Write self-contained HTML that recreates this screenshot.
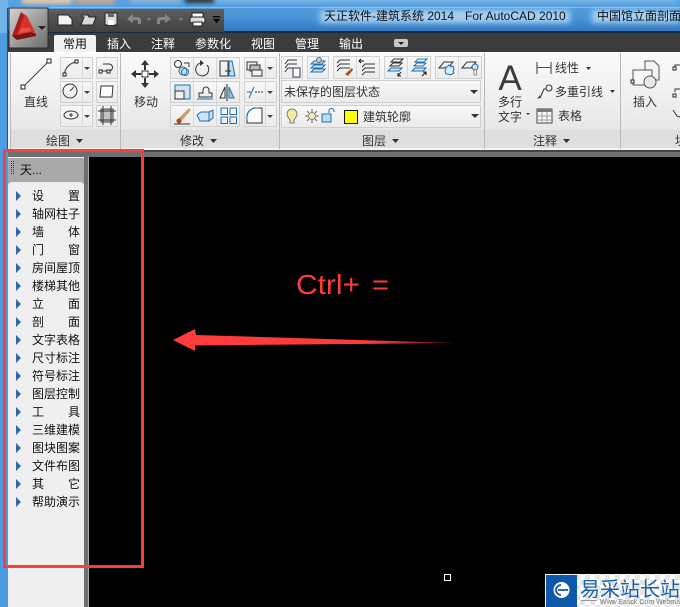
<!DOCTYPE html>
<html><head><meta charset="utf-8"><style>
html,body{margin:0;padding:0;background:#000;width:680px;height:607px;overflow:hidden}
svg{display:block}
text{font-family:"Liberation Sans","Noto Sans CJK SC",sans-serif;font-size:12px;fill:#222}
.w{fill:#fff}.m{fill:#111}.c{text-anchor:middle}
.k{fill:none;stroke:#333;stroke-width:1}.b{fill:none;stroke:#1f6fae;stroke-width:1}
</style></head><body>
<svg width="680" height="607" viewBox="0 0 680 607" xmlns="http://www.w3.org/2000/svg">
<defs>
<linearGradient id="tb" x1="0" y1="0" x2="0" y2="1"><stop offset="0" stop-color="#5aa3e0"/><stop offset=".55" stop-color="#4a93d8"/><stop offset="1" stop-color="#2f74bf"/></linearGradient>
<linearGradient id="rb" x1="0" y1="0" x2="0" y2="1"><stop offset="0" stop-color="#fafafa"/><stop offset="1" stop-color="#e8e8e8"/></linearGradient>
<linearGradient id="btn" x1="0" y1="0" x2="0" y2="1"><stop offset="0" stop-color="#f8f8f8"/><stop offset="1" stop-color="#ebebeb"/></linearGradient>
<linearGradient id="men" x1="0" y1="0" x2="1" y2="1"><stop offset="0" stop-color="#d4d4d4"/><stop offset="1" stop-color="#6a6a6a"/></linearGradient>
<linearGradient id="qa" x1="0" y1="0" x2="0" y2="1"><stop offset="0" stop-color="#5f5f5f"/><stop offset="1" stop-color="#404040"/></linearGradient>
<linearGradient id="ar" x1="0" y1="0" x2="1" y2="0"><stop offset="0" stop-color="#ff3c3c"/><stop offset=".7" stop-color="#ff3c3c"/><stop offset="1" stop-color="#5a1010"/></linearGradient>
<pattern id="chk" width="10" height="10" patternUnits="userSpaceOnUse"><rect width="10" height="10" fill="#fff"/><rect width="5" height="5" fill="#e4e4e4"/><rect x="5" y="5" width="5" height="5" fill="#e4e4e4"/></pattern>
<filter id="bl" x="-20%" y="-60%" width="140%" height="220%"><feGaussianBlur stdDeviation="3"/></filter>
<filter id="bl2" x="-20%" y="-100%" width="140%" height="300%"><feGaussianBlur stdDeviation="2"/></filter>
</defs>

<!-- title bar -->
<rect width="680" height="33" fill="url(#tb)"/>
<g filter="url(#bl2)">
<rect x="22" y="-3" width="50" height="7" fill="#e8c9a8"/>
<rect x="75" y="-3" width="40" height="7" fill="#c4a894"/>
<rect x="130" y="-3" width="50" height="6" fill="#8fb7d9"/>
<rect x="185" y="-3" width="30" height="6" fill="#333"/>
<rect x="215" y="-3" width="460" height="5" fill="#7fb9e8"/>
</g>
<rect x="0" y="0" width="8" height="33" fill="#5aa6e6"/>
<rect x="8" y="7" width="672" height="1" fill="#8ec4ee" opacity=".8"/>
<g filter="url(#bl)">
<rect x="320" y="10" width="250" height="13" fill="#a5d0f2"/>
<rect x="592" y="10" width="88" height="13" fill="#a5d0f2"/>
</g>
<text x="324" y="20" class="m">天正软件-建筑系统 2014</text>
<text x="465" y="20" class="m">For AutoCAD 2010</text>
<text x="597" y="20" class="m">中国馆立面剖面</text>

<!-- tab bar -->
<rect x="0" y="0" width="8" height="607" fill="#4d9be0"/>
<rect x="0" y="0" width="8" height="33" fill="#6fb3ea"/>
<rect x="7" y="8" width="1" height="145" fill="#2d4f70"/>
<rect x="8" y="32" width="672" height="21" fill="#3c3c3c"/>
<rect x="8" y="31" width="672" height="2" fill="#1a2a3a"/>

<!-- quick access -->
<rect x="48" y="9" width="176" height="23" fill="url(#qa)"/>
<path d="M58 25V15h10l4 4v6z" fill="#f2f2f2" stroke="#222"/>
<path d="M81 25l3-8h-2v-2h6l1 2h7l-3 8z" fill="#d8d8d8" stroke="#222"/>
<rect x="105" y="13" width="12" height="12" fill="#d8d8d8" stroke="#222"/><rect x="108" y="13" width="6" height="4" fill="#667"/><rect x="108" y="20" width="6" height="5" fill="#fff"/>
<path d="M127 19l6-5v3h5a3 3 0 0 1 3 3v4h-3v-2a2 2 0 0 0-2-2h-3v3z" fill="#868686"/>
<path d="M147 18h4l-2 3z" fill="#888"/>
<path d="M171 19l-6-5v3h-5a3 3 0 0 0-3 3v4h3v-2a2 2 0 0 1 2-2h3v3z" fill="#868686"/>
<path d="M179 18h4l-2 3z" fill="#888"/>
<rect x="192" y="13" width="11" height="4" fill="#fff" stroke="#222"/><rect x="190" y="17" width="15" height="6" rx="2" fill="#ddd" stroke="#222"/><rect x="193" y="22" width="9" height="4" fill="#fff" stroke="#222"/>
<rect x="213" y="16" width="7" height="1.500" fill="#000"/><path d="M213 19h7l-3.500 4z" fill="#000"/>

<!-- menu button -->
<rect x="9" y="8" width="39" height="40" fill="url(#men)" stroke="#2a2a2a"/>
<path d="M12 36L21 12l6 4 9 18-5-2-14 3z" fill="#d8322e"/>
<path d="M12 36l5 4 19-4v-2l-5-2-14 3z" fill="#7a1412"/>
<path d="M21 12l-9 24 5-1 7-19z" fill="#a81e1c"/>
<path d="M21 28h9l1 3-12 2z" fill="#f0504a"/>
<path d="M38 26h8l-4 4z" fill="#222"/>

<!-- tabs -->
<path d="M54 52V37a2 2 0 0 1 2-2h38a2 2 0 0 1 2 2v16H54z" fill="#f1f1f1"/>
<text x="63" y="48" class="m">常用</text>
<text x="107" y="48" class="w">插入</text>
<text x="151" y="48" class="w">注释</text>
<text x="195" y="48" class="w">参数化</text>
<text x="251" y="48" class="w">视图</text>
<text x="295" y="48" class="w">管理</text>
<text x="339" y="48" class="w">输出</text>
<rect x="394" y="39" width="14" height="8" rx="2" fill="#c8c8c8"/><path d="M398 42h6l-3 3z" fill="#222"/>

<!-- ribbon -->
<rect x="8" y="52" width="672" height="98" fill="#f2f2f2"/>
<rect x="8" y="52" width="672" height="1" fill="#fff"/>
<rect x="10" y="53" width="670" height="77" fill="url(#rb)"/>
<rect x="10" y="130" width="670" height="18" fill="#dedede"/>
<rect x="10" y="148" width="670" height="2" fill="#f4f4f4"/>
<rect x="10" y="53" width="1" height="96" fill="#b9b9b9"/>
<rect x="120" y="53" width="1" height="96" fill="#b9b9b9"/>
<rect x="279" y="53" width="1" height="96" fill="#b9b9b9"/>
<rect x="484" y="53" width="1" height="96" fill="#b9b9b9"/>
<rect x="620" y="53" width="1" height="96" fill="#b9b9b9"/>
<rect x="0" y="150" width="680" height="7" fill="#6f6f6f"/>
<rect x="0" y="150" width="680" height="2" fill="#444"/>
<rect x="0" y="150" width="8" height="457" fill="#4d9be0"/>

<!-- panel titles -->
<text x="46" y="145" style="fill:#333">绘图</text><path d="M76 139h7l-3.500 4z" fill="#333"/>
<text x="180" y="145" style="fill:#333">修改</text><path d="M210 139h7l-3.500 4z" fill="#333"/>
<text x="362" y="145" style="fill:#333">图层</text><path d="M392 139h7l-3.500 4z" fill="#333"/>
<text x="533" y="145" style="fill:#333">注释</text><path d="M563 139h7l-3.500 4z" fill="#333"/>
<text x="675" y="145" style="fill:#333">块</text>

<!-- draw panel -->
<path d="M23 87L49 61" stroke="#444" fill="none"/>
<rect x="21" y="85" width="4" height="4" fill="#fff" stroke="#222"/><rect x="47" y="59" width="4" height="4" fill="#fff" stroke="#222"/>
<text x="24" y="106" style="fill:#333">直线</text>
<g fill="url(#btn)" stroke="#d0d0d0">
<rect x="60.500" y="57.500" width="32" height="21"/><rect x="60.500" y="81.500" width="32" height="21"/><rect x="60.500" y="105.500" width="32" height="21"/>
<rect x="96.500" y="57.500" width="21" height="21"/><rect x="96.500" y="81.500" width="21" height="21"/><rect x="96.500" y="105.500" width="21" height="21"/>
<rect x="170.500" y="57.500" width="69" height="21"/><rect x="170.500" y="81.500" width="69" height="21"/><rect x="170.500" y="105.500" width="69" height="21"/>
<rect x="244.500" y="57.500" width="32" height="21"/><rect x="244.500" y="81.500" width="32" height="21"/><rect x="244.500" y="105.500" width="32" height="21"/>
<rect x="281.500" y="56.500" width="21" height="22"/><rect x="307.500" y="56.500" width="21" height="22"/><rect x="333.500" y="56.500" width="46" height="22"/><rect x="384.500" y="56.500" width="46" height="22"/><rect x="435.500" y="56.500" width="46" height="22"/>
<rect x="281.500" y="80.500" width="199" height="22"/><rect x="281.500" y="105.500" width="199" height="22"/>
</g>
<g stroke="#d8d8d8"><path d="M82.500 58v20M82.500 82v20M82.500 106v20M193.500 58v68M216.500 58v68M265.500 58v20M265.500 82v20M265.500 106v20M356.500 57v21M407.500 57v21M458.500 57v21"/></g>
<g fill="#444"><path d="M84 67h6l-3 3zM84 91h6l-3 3zM84 115h6l-3 3zM267 67h6l-3 3zM267 91h6l-3 3zM267 115h6l-3 3z"/></g>
<path d="M64 75q2-11 12-13" class="k"/><rect x="63" y="73" width="3" height="3" fill="#fff" stroke="#222"/><rect x="75" y="60" width="3" height="3" fill="#fff" stroke="#222"/>
<circle cx="70" cy="91" r="7" class="k"/><path d="M70 91l4-4" class="k"/>
<ellipse cx="71" cy="115" rx="7" ry="4" class="k"/><path d="M69 115h4M71 113v4" class="k"/>
<path d="M101 71h8a3 3 0 0 0 0-7h-6" class="k"/><rect x="99" y="70" width="3" height="3" fill="#fff" stroke="#222"/><rect x="107" y="70" width="3" height="3" fill="#fff" stroke="#222"/>
<path d="M101 86h12l-1 11h-12z" fill="#fff" stroke="#333"/>
<rect x="101" y="109" width="12" height="13" fill="#c4c4c4" stroke="#444"/><path d="M98 111h18M98 120h18M103 106v19M111 106v19" class="k"/>

<!-- move -->
<path d="M145 60l4 5h-3v5h-2v-5h-3zM145 88l4-5h-3v-5h-2v5h-3zM131 74l5-4v3h5v2h-5v3zM159 74l-5-4v3h-5v2h5v3z" fill="#333"/>
<rect x="142" y="71" width="6" height="6" fill="#fff" stroke="#333"/>
<text x="134" y="106" style="fill:#333">移动</text>

<!-- modify icons -->
<circle cx="178" cy="64" r="3.500" class="k"/><circle cx="183" cy="71" r="4" fill="#cfe5f5" stroke="#1f6fae"/><circle cx="185" cy="72" r="3.500" class="b"/><path d="M184 63h5v4" class="k"/>
<path d="M201 63a6.500 6.500 0 1 0 6 2" class="k" stroke-width="1.500"/><path d="M200 60l4 3-4 3z" fill="#333"/>
<path d="M220 61h8v15h-8z" class="k"/><path d="M229 61h3l3 15h-6z" fill="#c0dcf0" stroke="#1f6fae"/><path d="M225 71h6" class="k"/>
<rect x="175" y="85" width="15" height="14" fill="#cfe5f5" stroke="#1f6fae"/><rect x="175" y="91" width="9" height="8" fill="#f2f2f2" stroke="#333"/>
<path d="M199 97v-4h4v-3a3 3 0 0 1 6 0v3h3v4z" class="k"/><path d="M197 99h16" class="b"/>
<path d="M227 84v17" stroke="#222"/><path d="M225 87l-5 11h5z" fill="#f2f2f2" stroke="#333"/><path d="M229 87l5 11h-5z" fill="#9cc8e6" stroke="#1f6fae"/>
<path d="M176 121l13-13 2 2-11 13z" fill="#c8a070"/><circle cx="179" cy="121" r="2.500" fill="#b5421a"/><path d="M174 124h16" stroke="#333"/>
<path d="M197 115l4-3h8v9h-9zM209 112l4-2v8l-4 3z" fill="#cfe5f5" stroke="#1f6fae"/>
<g class="b"><rect x="221" y="108" width="6.500" height="6.500"/><rect x="230" y="108" width="6.500" height="6.500"/><rect x="221" y="117" width="6.500" height="6.500"/><rect x="230" y="117" width="6.500" height="6.500"/></g>
<rect x="247" y="62" width="10" height="8" fill="#eee" stroke="#333"/><rect x="250" y="65" width="10" height="6" fill="#bbb" stroke="#333"/><rect x="252" y="70" width="10" height="6" fill="#f5f5f5" stroke="#333"/>
<path d="M254 87l-5 11" stroke="#1f6fae"/><path d="M247 92h4" stroke="#1f6fae"/><path d="M255 92h8" stroke="#333" stroke-dasharray="2 1"/>
<path d="M247 123v-6a9 9 0 0 1 9-9h6v15z" fill="#fafafa" stroke="#333"/><path d="M247 120v-3a9 9 0 0 1 9-9h2" class="b"/>

<!-- layer icons -->
<g class="k"><path d="M285 64l3-4h9M285 68l3-4h9M285 72l3-4h9"/></g><rect x="293" y="68" width="7" height="9" fill="#fff" stroke="#335"/>
<g><path d="M311 64l3-3h11l-3 3zM311 68l3-3h11l-3 3zM311 72l3-3h11l-3 3z" fill="#cfe5f5" stroke="#1f6fae"/></g><circle cx="319" cy="60" r="2.500" fill="#ccc" stroke="#666"/>
<g class="k"><path d="M337 63l3-3h10M337 67l3-3h10M337 71l3-3h10"/></g><path d="M345 74l7-6 1 2-5 6z" fill="#a8561c"/>
<g class="k"><path d="M362 67l3-3h10M362 71l3-3h10M362 75l3-3h10"/></g><path d="M361 59l-2 2 2 2M359 61h5" stroke="#111" fill="none"/>
<g class="k"><path d="M391 62l3-3h9l-3 3zM390 66l3-3h9l-3 3z"/></g><path d="M388 71l3-3h11l-3 3z" fill="#cfe5f5" stroke="#1f6fae"/><path d="M401 72l-3 4M398 73v3h3" stroke="#111" fill="none"/>
<g class="b"><path d="M415 62l3-3h9l-3 3zM414 66l3-3h9l-3 3z"/></g><path d="M412 71l3-3h11l-3 3z" fill="#cfe5f5" stroke="#1f6fae"/><path d="M422 76l4-4M423 72h3v3" stroke="#111" fill="none"/>
<path d="M439 68l5-6h9l-5 6z" class="k"/><path d="M447 67l2-2 2 2 2-1 1 3-1 2 1 2-2 1-2 1-2-1-2 0-1-3 1-2-1-2z" fill="#dbeefa" stroke="#1f6fae"/>
<path d="M462 68l5-6h9l-5 6z" class="k"/><circle cx="475" cy="67" r="3" fill="#cfe5f5" stroke="#1f6fae"/><rect x="474" y="70" width="2.500" height="5" fill="#fff" stroke="#666" stroke-width=".7"/>

<text x="284" y="96" style="fill:#333">未保存的图层状态</text>
<path d="M470 90h8l-4 4z" fill="#333"/>
<path d="M288 117a5 5 0 1 1 8 0l-2 3v3h-4v-3z" fill="#f5e9a6" stroke="#777"/>
<circle cx="312" cy="116" r="3.500" fill="#f5eab0" stroke="#888"/><path d="M312 109v3M312 120v3M305 116h3M316 116h3M307 111l2 2M317 111l-2 2M307 121l2-2M317 121l-2-2" stroke="#666"/>
<rect x="322" y="114" width="9" height="8" fill="#bcdcf2" stroke="#1f6fae"/><path d="M329 113v-2a2.500 2.500 0 0 1 5 0v1" class="b"/>
<rect x="344.500" y="110.500" width="13" height="13" fill="#ff0" stroke="#111"/>
<text x="363" y="121" style="fill:#333">建筑轮廓</text>
<path d="M471 114h8l-4 4z" fill="#333"/>

<!-- annotation -->
<text x="510" y="90" class="c" style="font-size:35px;fill:#3c3c3c">A</text>
<text x="498" y="106" style="fill:#333">多行</text>
<text x="498" y="121" style="fill:#333">文字</text><path d="M526 113h4l-2 2z" fill="#333"/>
<path d="M537 62v12M551 62v12" stroke="#333" fill="none"/><rect x="537" y="67" width="14" height="1" fill="#555"/>
<text x="555" y="72" style="fill:#333">线性</text><path d="M586 67h5l-2.500 3z" fill="#333"/>
<circle cx="549" cy="88" r="3" class="k"/><path d="M546 89h-2l-4 9" class="k"/><path d="M537 99l3-1 0-3z" fill="#333"/>
<text x="555" y="96" style="fill:#333">多重引线</text><path d="M610 90h5l-2.500 3z" fill="#333"/>
<rect x="537" y="109" width="15" height="14" fill="#fafafa" stroke="#444"/><rect x="537" y="109" width="15" height="3" fill="#777"/><path d="M542 112v11M547 112v11M537 116h15M537 120h15" stroke="#999"/>
<text x="558" y="120" style="fill:#333">表格</text>

<!-- insert -->
<path d="M645 61h9l5 5v14h-14z" fill="#f4f4f4" stroke="#555"/>
<rect x="633" y="70" width="19" height="15" fill="#f8f8f8" stroke="#555"/>
<circle cx="650" cy="82" r="6" fill="#e8e8e8" stroke="#555"/>
<rect x="631" y="80" width="3" height="3" fill="#fff" stroke="#222"/>
<text x="633" y="106" style="fill:#333">插入</text>
<path d="M675 68v-3h5M675 92v-3h5M673 110l4 6 3 1" class="k"/>
<rect x="673" y="67" width="3" height="3" fill="#fff" stroke="#222"/><rect x="673" y="94" width="3" height="3" fill="#fff" stroke="#222"/>

<!-- left panel -->
<rect x="8" y="157" width="77" height="450" fill="#efefef"/>
<path d="M8 180v-20a2 2 0 0 1 2-2h72a2 2 0 0 1 2 2v20z" fill="#a9a9a9"/>
<path d="M8 180h76v6a4 4 0 0 0-4-4H12a4 4 0 0 0-4 4z" fill="#a9a9a9"/>
<rect x="84" y="157" width="5" height="450" fill="#6f6f6f"/>
<rect x="88" y="157" width="1" height="450" fill="#ababab"/>
<path d="M11.500 161v14" stroke="#333" stroke-dasharray="1 1"/><path d="M13.500 161v14" stroke="#333" stroke-dasharray="1 1"/>
<text x="20" y="174" class="m">天...</text>
<g fill="#2f6aa3">
<path d="M16 191l5 5-5 5zM16 209l5 5-5 5zM16 227l5 5-5 5zM16 245l5 5-5 5zM16 263l5 5-5 5zM16 281l5 5-5 5zM16 299l5 5-5 5zM16 317l5 5-5 5zM16 335l5 5-5 5zM16 353l5 5-5 5zM16 371l5 5-5 5zM16 389l5 5-5 5zM16 407l5 5-5 5zM16 425l5 5-5 5zM16 443l5 5-5 5zM16 461l5 5-5 5zM16 479l5 5-5 5zM16 497l5 5-5 5z"/>
</g>
<g class="m">
<text x="32" y="200" class="m">设</text><text x="68" y="200" class="m">置</text>
<text x="32" y="218" class="m">轴网柱子</text>
<text x="32" y="236" class="m">墙</text><text x="68" y="236" class="m">体</text>
<text x="32" y="254" class="m">门</text><text x="68" y="254" class="m">窗</text>
<text x="32" y="272" class="m">房间屋顶</text>
<text x="32" y="290" class="m">楼梯其他</text>
<text x="32" y="308" class="m">立</text><text x="68" y="308" class="m">面</text>
<text x="32" y="326" class="m">剖</text><text x="68" y="326" class="m">面</text>
<text x="32" y="344" class="m">文字表格</text>
<text x="32" y="362" class="m">尺寸标注</text>
<text x="32" y="380" class="m">符号标注</text>
<text x="32" y="398" class="m">图层控制</text>
<text x="32" y="416" class="m">工</text><text x="68" y="416" class="m">具</text>
<text x="32" y="434" class="m">三维建模</text>
<text x="32" y="452" class="m">图块图案</text>
<text x="32" y="470" class="m">文件布图</text>
<text x="32" y="488" class="m">其</text><text x="68" y="488" class="m">它</text>
<text x="32" y="506" class="m">帮助演示</text>
</g>

<!-- annotations over canvas -->
<rect x="4.500" y="150.500" width="138" height="416" fill="none" stroke="#ff3c3c" stroke-width="3"/>
<text x="296" y="294" textLength="64" lengthAdjust="spacingAndGlyphs" style="font-size:28px;fill:#ff3c3c">Ctrl+</text>
<text x="372" y="294" textLength="17" lengthAdjust="spacingAndGlyphs" style="font-size:28px;fill:#ff3c3c">=</text>
<path d="M173 340L195 329L196 335L457 343L195 345.500L195 351z" fill="url(#ar)"/>
<rect x="444.500" y="574.500" width="6" height="6" fill="none" stroke="#fff"/>

<!-- watermark -->
<rect x="545" y="574" width="135" height="33" fill="url(#chk)"/>
<rect x="546" y="575" width="31" height="32" fill="#0d58a8"/>
<circle cx="561.500" cy="590" r="8" fill="#fff"/>
<path d="M558 590h10M561 585a5 5 0 0 0 0 10" stroke="#0d58a8" stroke-width="1.800" fill="none"/>
<text x="580" y="596" style="font-size:20px;fill:#1a62ae">易采站长站</text>
<rect x="581" y="600" width="16" height="1" fill="#999"/>
<text x="600" y="604" style="font-size:7px;fill:#777">Www.Easck.Com Webmaster</text>
</svg>
</body></html>
